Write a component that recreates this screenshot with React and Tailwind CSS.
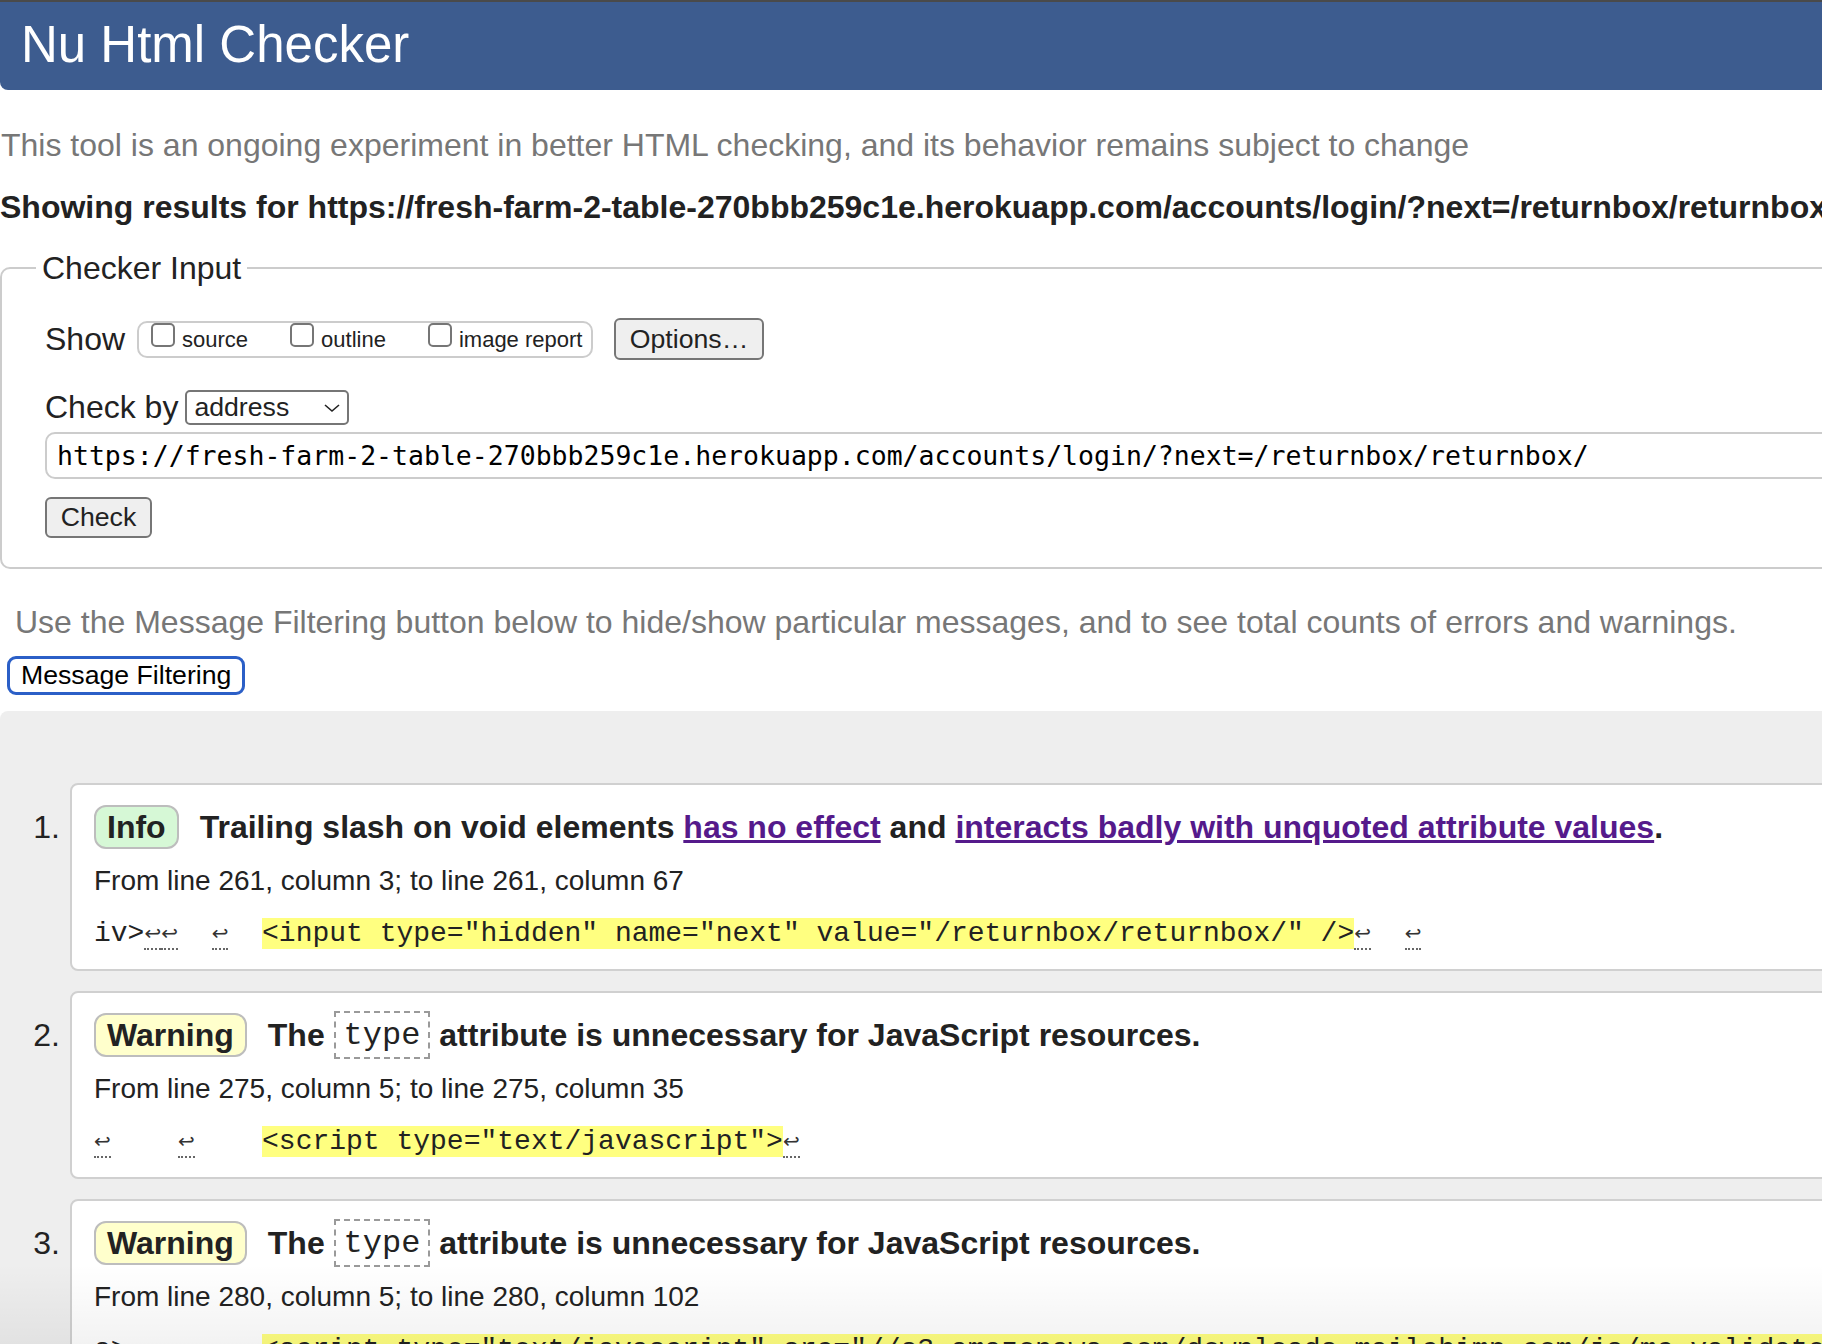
import React from 'react';

const mono = "font-['Liberation_Mono','Courier_New',monospace]";

const Lf = () => (
    <span className="inline-block w-[16.8px] h-[32px] align-top text-center text-[20px] leading-[30px] text-[#333] font-['DejaVu_Sans',sans-serif] border-b-2 border-dotted border-[#666]">↩</span>
);

const Hl = ({ children }) => <span className="bg-[#ffff80]">{children}</span>;

const Checkbox = ({ label, className = '' }) => (
    <div className={`flex items-start ${className}`}>
        <span className="w-[24px] h-[24px] border-2 border-[#767676] rounded-[5px] bg-white" />
        <span className="ml-[7px] mt-[4px] text-[22px] leading-[26px]">{label}</span>
    </div>
);

const Badge = ({ kind }) => (
    <span
        className={`h-[44px] border-2 border-[#bdbdbd] rounded-[12px] px-[11px] font-bold text-[32px] leading-[40px] ${
            kind === 'Info' ? 'bg-[#d6f8d6]' : 'bg-[#ffffcc]'
        }`}
    >
        {kind}
    </span>
);

const TypeCode = () => (
    <code className={`${mono} font-normal text-[32px] leading-[36px] px-[8px] pt-[5px] pb-[3px] border-2 border-dashed border-[#9a9a9a]`}>type</code>
);

const Message = ({ n, kind, title, from, code }) => (
    <div className="flex">
        <div className="w-[60px] text-right pt-[24px] text-[32px] leading-[40px]">{n}.</div>
        <div className="ml-[10px] flex-1 bg-white border-2 border-[#d0d0d0] rounded-l-[8px] pl-[22px] pt-[20px] pb-[19px]">
            <div className="flex items-center h-[44px]">
                <Badge kind={kind} />
                <div className="ml-[21px] inline-flex items-center whitespace-pre font-bold text-[32px] leading-[40px]">{title}</div>
            </div>
            <div className="mt-[15px] text-[28px] leading-[34px]">{from}</div>
            <div className={`mt-[20px] ${mono} text-[28px] leading-[32px] whitespace-pre`}>{code}</div>
        </div>
    </div>
);

const App = () => (
    <div className="relative w-[1822px] h-[1344px] overflow-hidden bg-white font-['Liberation_Sans',Arial,sans-serif] text-[#222]">
        <div className="w-[2100px]">
            <div className="h-[2px] bg-[#4a4a4a]" />
            <h1 className="h-[88px] bg-[#3d5c8f] rounded-bl-[8px] pl-[21px] pb-[4px] flex items-center text-white text-[51px] leading-none">
                Nu Html Checker
            </h1>

            <p className="mt-[36px] pl-[1px] text-[32px] leading-[38px] text-[#777]">
                This tool is an ongoing experiment in better HTML checking, and its behavior remains subject to change
            </p>
            <p className="mt-[24px] text-[32px] leading-[38px] font-bold whitespace-nowrap">
                Showing results for https://fresh-farm-2-table-270bbb259c1e.herokuapp.com/accounts/login/?next=/returnbox/returnbox/
            </p>

            <fieldset className="mt-[23px] border-2 border-[#cccccc] rounded-[10px]">
                <legend className="ml-[34px] px-[6px] text-[32px] leading-[38px]">Checker Input</legend>
                <div className="pl-[43px] pb-[29px]">
                    <div className="mt-[31px] flex items-center">
                        <span className="text-[32px] leading-[38px]">Show</span>
                        <div className="ml-[12px] w-[456px] h-[37px] border-2 border-[#cccccc] rounded-[10px] pl-[12px] flex items-start">
                            <Checkbox label="source" />
                            <Checkbox label="outline" className="ml-[42px]" />
                            <Checkbox label="image report" className="ml-[42px]" />
                        </div>
                        <button className="ml-[21px] w-[150px] h-[42px] bg-[#efefef] border-2 border-[#767676] rounded-[6px] text-[26.67px] leading-none">
                            Options…
                        </button>
                    </div>

                    <div className="mt-[30px] flex items-center">
                        <span className="text-[32px] leading-[35px]">Check by</span>
                        <div className="ml-[7px] w-[164px] h-[35px] border-2 border-[#767676] rounded-[5px] pl-[7px] pr-[6px] flex items-center justify-between text-[26.67px] leading-none">
                            <span>address</span>
                            <svg width="18" height="10" viewBox="0 0 18 10" fill="none" stroke="#222" strokeWidth="1.6">
                                <path d="M2 2l7 6 7-6" />
                            </svg>
                        </div>
                    </div>

                    <div className="mt-[7px] h-[47px] border-2 border-[#cccccc] rounded-[10px] pl-[10px] flex items-center font-['DejaVu_Sans_Mono',monospace] text-[26.5px] text-black whitespace-nowrap">
                        https://fresh-farm-2-table-270bbb259c1e.herokuapp.com/accounts/login/?next=/returnbox/returnbox/
                    </div>

                    <button className="mt-[18px] w-[107px] h-[41px] bg-[#efefef] border-2 border-[#767676] rounded-[6px] text-[26.67px] leading-none">
                        Check
                    </button>
                </div>
            </fieldset>

            <p className="mt-[34px] pl-[15px] text-[32px] leading-[38px] text-[#777]">
                Use the Message Filtering button below to hide/show particular messages, and to see total counts of errors and warnings.
            </p>
            <button className="mt-[15px] ml-[7px] h-[39px] px-[11px] bg-white border-[3px] border-[#2b5fc7] rounded-[9px] text-[26.67px] leading-none text-black">
                Message Filtering
            </button>

            <div className="mt-[16px] bg-[#eeeeee] rounded-tl-[8px] pt-[72px] pb-[40px] flex flex-col gap-[20px]">
                <Message
                    n={1}
                    kind="Info"
                    title={
                        <>
                            {'Trailing slash on void elements '}
                            <a className="text-[#551a8b] underline">has no effect</a>
                            {' and '}
                            <a className="text-[#551a8b] underline">interacts badly with unquoted attribute values</a>
                            {'.'}
                        </>
                    }
                    from="From line 261, column 3; to line 261, column 67"
                    code={
                        <>
                            {'iv>'}
                            <Lf />
                            <Lf />
                            {'  '}
                            <Lf />
                            {'  '}
                            <Hl>{'<input type="hidden" name="next" value="/returnbox/returnbox/" />'}</Hl>
                            <Lf />
                            {'  '}
                            <Lf />
                        </>
                    }
                />
                <Message
                    n={2}
                    kind="Warning"
                    title={
                        <>
                            {'The '}
                            <TypeCode />
                            {' attribute is unnecessary for JavaScript resources.'}
                        </>
                    }
                    from="From line 275, column 5; to line 275, column 35"
                    code={
                        <>
                            <Lf />
                            {'    '}
                            <Lf />
                            {'    '}
                            <Hl>{'<script type="text/javascript">'}</Hl>
                            <Lf />
                        </>
                    }
                />
                <Message
                    n={3}
                    kind="Warning"
                    title={
                        <>
                            {'The '}
                            <TypeCode />
                            {' attribute is unnecessary for JavaScript resources.'}
                        </>
                    }
                    from="From line 280, column 5; to line 280, column 102"
                    code={
                        <>
                            {'s>'}
                            <Lf />
                            {'    '}
                            <Lf />
                            {'  '}
                            <Hl>{'<script type="text/javascript" src="//s3.amazonaws.com/downloads.mailchimp.com/js/mc-validate.js"></script>'}</Hl>
                        </>
                    }
                />
            </div>
        </div>
        <div className="pointer-events-none absolute left-0 right-0 bottom-0 h-[80px] bg-linear-to-b from-transparent to-black/5" />
    </div>
);

export default App;
